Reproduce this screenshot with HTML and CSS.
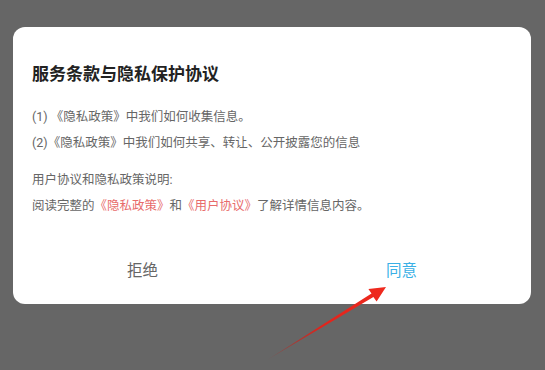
FILE: index.html
```html
<!DOCTYPE html>
<html lang="zh-CN">
<head>
<meta charset="utf-8">
<title>服务条款与隐私保护协议</title>
<link rel="stylesheet" href="styles.css">
</head>
<body>
<div class="dialog">
  <h1 class="title">服务条款与隐私保护协议</h1>
  <p class="line">(1) 《隐私政策》中我们如何收集信息。</p>
  <p class="line">(2)《隐私政策》中我们如何共享、转让、公开披露您的信息</p>
  <p class="line gap">用户协议和隐私政策说明:</p>
  <p class="line">阅读完整的<span class="link">《隐私政策》</span>和<span class="link">《用户协议》</span>了解详情信息内容。</p>
  <div class="actions">
    <button class="btn reject">拒绝</button>
    <button class="btn agree">同意</button>
  </div>
</div>
<svg class="arrow" width="545" height="370" viewBox="0 0 545 370">
  <defs>
    <linearGradient id="ag" x1="267" y1="360" x2="386" y2="287" gradientUnits="userSpaceOnUse">
      <stop offset="0" stop-color="#b0201a" stop-opacity="0.2"/>
      <stop offset="0.45" stop-color="#e0241c"/>
      <stop offset="1" stop-color="#f02a1e"/>
    </linearGradient>
  </defs>
  <polygon fill="url(#ag)" points="267,360 371.5,293.6 368.4,289 386,287 376.6,301.6 373.4,296.9"/>
</svg>
</body>
</html>
```

FILE: styles.css
```css
html, body {
  margin: 0;
  padding: 0;
}
body {
  background: #666666;
  width: 545px;
  height: 370px;
  overflow: hidden;
  position: relative;
  font-family: Roboto, "Noto Sans CJK SC", sans-serif;
}
.dialog {
  margin: 27px 0 0 13px;
  width: 518px;
  height: 277px;
  box-sizing: border-box;
  background: #ffffff;
  border-radius: 12px;
  padding: 35px 0 0 19px;
  display: flex;
  flex-direction: column;
}
.title {
  margin: 0 0 18px 0;
  font-size: 17px;
  line-height: 24px;
  font-weight: bold;
  color: #222222;
}
.line {
  margin: 0;
  font-size: 12.5px;
  line-height: 26px;
  color: #666666;
  white-space: nowrap;
}
.line.gap {
  margin-top: 11px;
}
.link {
  color: #e86b6b;
}
.actions {
  margin: 24px 0 0 -19px;
  height: 52px;
  display: flex;
}
.btn {
  flex: 1;
  border: none;
  background: transparent;
  font-family: inherit;
  font-size: 15.5px;
  padding: 0;
  cursor: pointer;
}
.reject {
  color: #666666;
}
.agree {
  color: #3ab0e6;
}
.arrow {
  position: absolute;
  left: 0;
  top: 0;
  pointer-events: none;
}
```
